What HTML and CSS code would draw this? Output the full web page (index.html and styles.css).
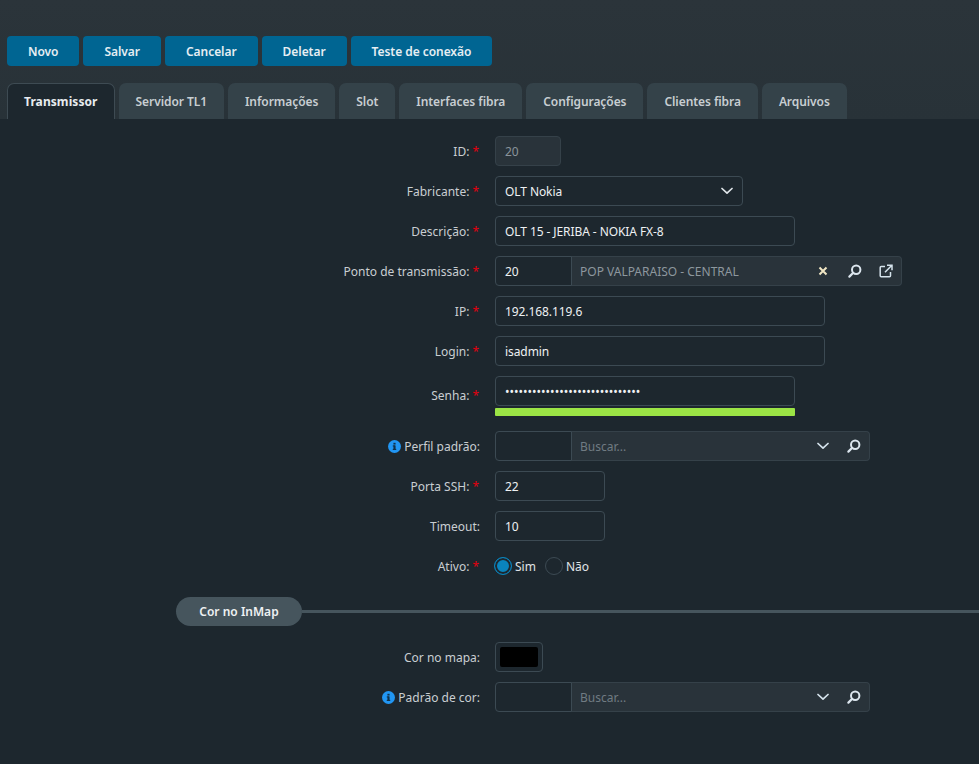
FILE: index.html
```html
<!DOCTYPE html>
<html lang="pt">
<head>
<meta charset="utf-8">
<title>Transmissor</title>
<link rel="stylesheet" href="styles.css">
</head>
<body>
<svg class="defs" width="0" height="0" aria-hidden="true">
  <symbol id="i-search" viewBox="0 0 14 14"><circle cx="8.2" cy="5.8" r="4.2" fill="none" stroke="currentColor" stroke-width="2"/><path d="M5.2 8.8 1.4 12.6" fill="none" stroke="currentColor" stroke-width="2.2" stroke-linecap="round"/></symbol>
  <symbol id="i-chev" viewBox="0 0 12 8"><path d="M1 1.5 6 6.2 11 1.5" fill="none" stroke="currentColor" stroke-width="1.7" stroke-linecap="round" stroke-linejoin="round"/></symbol>
  <symbol id="i-x" viewBox="0 0 10 10"><path d="M1.5 1.5 8.5 8.5M8.5 1.5 1.5 8.5" fill="none" stroke="currentColor" stroke-width="2"/></symbol>
  <symbol id="i-ext" viewBox="0 0 14 14"><path d="M6 2.5H2.2a1 1 0 0 0-1 1v8.3a1 1 0 0 0 1 1h8.3a1 1 0 0 0 1-1V8" fill="none" stroke="currentColor" stroke-width="1.5"/><path d="M6 8.3 12.4 1.8M8 1.2h5v5" fill="none" stroke="currentColor" stroke-width="1.5"/></symbol>
  <symbol id="i-info" viewBox="0 0 12 12"><circle cx="6" cy="6" r="6" fill="#2196f3"/><rect x="5" y="5" width="2" height="4" fill="#12324a"/><rect x="4.4" y="8.2" width="3.2" height="1" fill="#12324a"/><rect x="4.4" y="5" width="2" height="1" fill="#12324a"/><rect x="5" y="2.6" width="2" height="1.6" fill="#12324a"/></symbol>
</svg>

<header class="top">
  <div class="toolbar">
    <button class="btn">Novo</button>
    <button class="btn">Salvar</button>
    <button class="btn">Cancelar</button>
    <button class="btn">Deletar</button>
    <button class="btn">Teste de conexão</button>
  </div>
  <nav class="tabs">
    <a class="tab active">Transmissor</a>
    <a class="tab">Servidor TL1</a>
    <a class="tab">Informações</a>
    <a class="tab">Slot</a>
    <a class="tab">Interfaces fibra</a>
    <a class="tab">Configurações</a>
    <a class="tab">Clientes fibra</a>
    <a class="tab">Arquivos</a>
  </nav>
</header>

<main class="form">
  <div class="row">
    <label class="lbl">ID:<i>*</i></label>
    <div class="input disabled w66 muted">20</div>
  </div>
  <div class="row">
    <label class="lbl">Fabricante:<i>*</i></label>
    <div class="input w248 select">OLT Nokia<svg class="chev"><use href="#i-chev"/></svg></div>
  </div>
  <div class="row">
    <label class="lbl">Descrição:<i>*</i></label>
    <div class="input w300">OLT 15 - JERIBA - NOKIA FX-8</div>
  </div>
  <div class="row">
    <label class="lbl">Ponto de transmissão:<i>*</i></label>
    <div class="lookup w407">
      <div class="code">20</div>
      <div class="desc">
        <span class="desc-text">POP VALPARAISO - CENTRAL</span>
        <svg class="ic-x"><use href="#i-x"/></svg>
        <svg class="ic-s"><use href="#i-search"/></svg>
        <svg class="ic-e"><use href="#i-ext"/></svg>
      </div>
    </div>
  </div>
  <div class="row">
    <label class="lbl">IP:<i>*</i></label>
    <div class="input w330">192.168.119.6</div>
  </div>
  <div class="row">
    <label class="lbl">Login:<i>*</i></label>
    <div class="input w330">isadmin</div>
  </div>
  <div class="row row-tall">
    <label class="lbl">Senha:<i>*</i></label>
    <div class="stack w300">
      <div class="input pass">••••••••••••••••••••••••••••••</div>
      <div class="strength"></div>
    </div>
  </div>
  <div class="row">
    <label class="lbl"><svg class="info"><use href="#i-info"/></svg>Perfil padrão:</label>
    <div class="lookup w375">
      <div class="code"></div>
      <div class="desc">
        <span class="desc-text dim">Buscar...</span>
        <svg class="chev2"><use href="#i-chev"/></svg>
        <svg class="ic-s"><use href="#i-search"/></svg>
      </div>
    </div>
  </div>
  <div class="row">
    <label class="lbl">Porta SSH:<i>*</i></label>
    <div class="input w110">22</div>
  </div>
  <div class="row">
    <label class="lbl">Timeout:</label>
    <div class="input w110">10</div>
  </div>
  <div class="row">
    <label class="lbl">Ativo:<i>*</i></label>
    <div class="radios">
      <span class="radio on"></span><span class="radio-lbl">Sim</span>
      <span class="radio"></span><span class="radio-lbl">Não</span>
    </div>
  </div>

  <div class="section">
    <span class="pill">Cor no InMap</span>
    <span class="rule"></span>
  </div>

  <div class="row">
    <label class="lbl">Cor no mapa:</label>
    <div class="color"><span class="swatch"></span></div>
  </div>
  <div class="row">
    <label class="lbl"><svg class="info"><use href="#i-info"/></svg>Padrão de cor:</label>
    <div class="lookup w375">
      <div class="code"></div>
      <div class="desc">
        <span class="desc-text dim">Buscar...</span>
        <svg class="chev2"><use href="#i-chev"/></svg>
        <svg class="ic-s"><use href="#i-search"/></svg>
      </div>
    </div>
  </div>
</main>
</body>
</html>
```

FILE: styles.css
```css
* { box-sizing: border-box; }
html, body { margin: 0; padding: 0; }
body {
  background: #1d272e;
  color: #e8ecef;
  font-family: "Noto Sans", "Open Sans", sans-serif;
  font-size: 12px;
  height: 764px;
  overflow: hidden;
}
.defs { position: absolute; }

.top {
  background: linear-gradient(#2b343a, #283238);
  height: 119px;
  padding: 36px 7px 0;
}
.toolbar { display: flex; gap: 4px; }
.btn {
  height: 30px;
  padding: 0 21px;
  border: 0;
  border-radius: 4px;
  background: #006592;
  color: #e6eef3;
  font: 600 12px "Noto Sans", sans-serif;
  letter-spacing: -0.05px;
}
.tabs { display: flex; gap: 4px; margin-top: 17px; }
.tab {
  height: 36px;
  line-height: 37px;
  padding: 0 17px;
  background: #344249;
  color: #c8ced2;
  font-weight: 600;
  letter-spacing: -0.07px;
  border-radius: 7px 7px 0 0;
}
.tab.active {
  background: #1d272e;
  color: #e8ecef;
  font-weight: 700;
  letter-spacing: 0.08px;
  line-height: 35px;
  border: 1px solid #3e4b53;
  border-bottom: 0;
  padding: 0 16px;
}

.form { padding-top: 17px; }
.row {
  display: flex;
  align-items: center;
  gap: 15px;
  margin-bottom: 10px;
  min-height: 30px;
}
.row-tall { margin-bottom: 15px; }
.row-tall .lbl { padding-bottom: 2px; }
.lbl {
  display: flex;
  justify-content: flex-end;
  align-items: center;
  gap: 3px;
  width: 480px;
  flex: none;
  color: #c9ced2;
}
.lbl i { color: #e3000f; font-style: normal; margin-right: 1px; }

.input {
  height: 30px;
  line-height: 29px;
  padding: 0 9px;
  border: 1px solid #3c4a53;
  border-radius: 4px;
  background: #1d272e;
  color: #eef1f3;
  letter-spacing: -0.08px;
}
.disabled { background: #29333a; border-color: #354149; }
.muted { color: #8a949b; }
.w66 { width: 66px; }
.w110 { width: 110px; }
.w248 { width: 248px; }
.w300 { width: 300px; }
.w330 { width: 330px; }
.w375 { width: 375px; }
.w407 { width: 407px; }

.select { display: flex; justify-content: space-between; align-items: center; }
.chev { width: 12px; height: 8px; color: #dfe5e9; }

.lookup { display: flex; height: 30px; }
.code {
  width: 77px;
  flex: none;
  padding: 0 9px;
  line-height: 29px;
  border: 1px solid #3c4a53;
  border-radius: 4px 0 0 4px;
  color: #eef1f3;
}
.desc {
  flex: 1;
  display: flex;
  align-items: center;
  padding: 0 8px;
  margin-left: -1px;
  background: #29333a;
  border: 1px solid #354149;
  border-left-color: #3c4a53;
  border-radius: 0 4px 4px 0;
}
.desc-text { flex: 1; color: #8d979e; }
.desc-text.dim { color: #707b82; }
.ic-x { width: 10px; height: 10px; color: #f0e6c4; margin-right: 20px; }
.ic-s { width: 14px; height: 14px; color: #dce6ee; margin-right: 1px; }
.ic-e { width: 14px; height: 14px; color: #d5e3ec; margin-left: 16px; }
.chev2 { width: 12px; height: 8px; color: #d5e3ec; margin-right: 18px; }
.chev2 + .ic-s { margin-right: 0; }

.stack { display: flex; flex-direction: column; gap: 2px; }
.pass { width: 100%; color: #f0f2f4; letter-spacing: 0; }
.strength { height: 8px; background: #9be445; border-radius: 1px; }

.info { width: 13px; height: 13px; flex: none; }

.radios { display: flex; align-items: center; color: #e0e4e7; margin-left: -1px; }
.radio {
  width: 18px;
  height: 18px;
  border-radius: 50%;
  border: 1px solid #3c4a53;
  flex: none;
}
.radio.on {
  border-color: #0a84bd;
  background: #0a84bd;
  box-shadow: inset 0 0 0 2px #1d272e;
}
.radio-lbl { margin: 0 9px 0 3px; }

.section {
  display: flex;
  align-items: center;
  padding-left: 176px;
  margin: 16px 0 16px;
}
.pill {
  width: 126px;
  height: 29px;
  line-height: 29px;
  text-align: center;
  border-radius: 15px;
  background: #46555d;
  color: #eef1f3;
  font-weight: 600;
  flex: none;
}
.rule { flex: 1; height: 3px; background: #46555d; }

.color {
  width: 48px;
  height: 30px;
  border: 1px solid #3c4a53;
  border-radius: 4px;
  padding: 4px;
  background: #1d272e;
}
.swatch { display: block; height: 20px; background: #000; border-radius: 2px; }
```
